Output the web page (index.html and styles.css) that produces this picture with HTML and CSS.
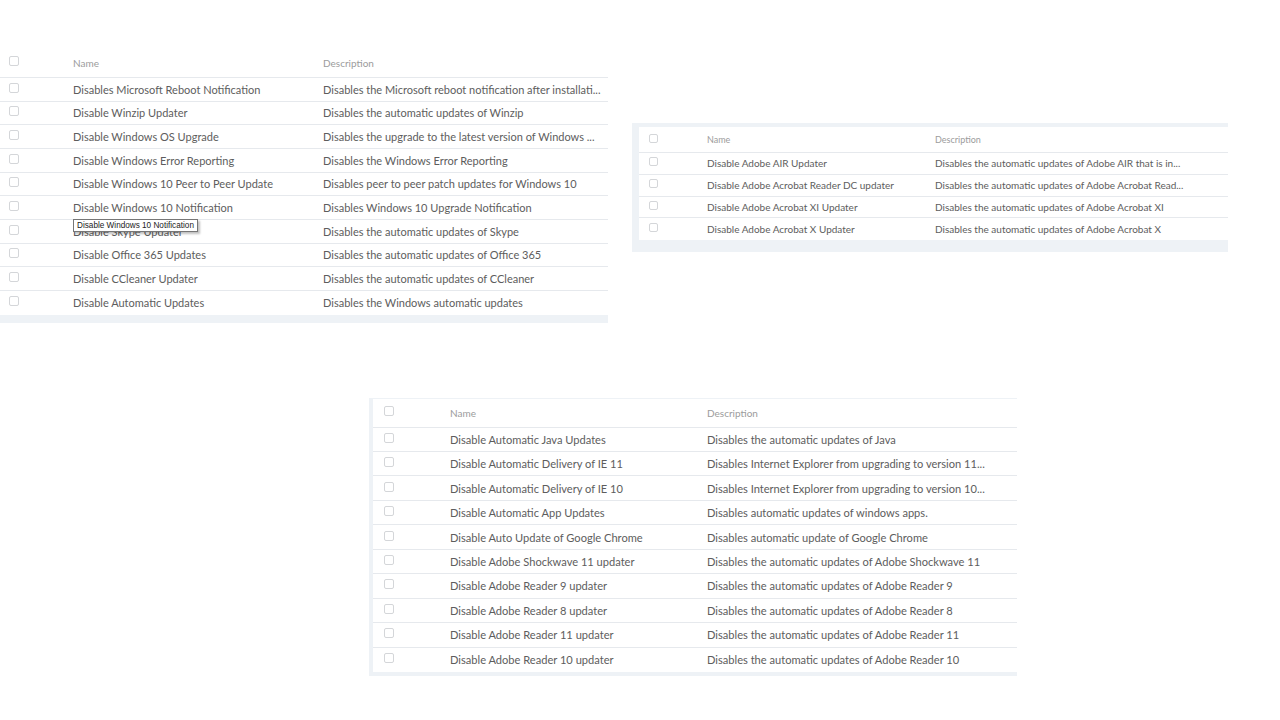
FILE: index.html
```html
<!DOCTYPE html>
<html>
<head>
<meta charset="utf-8">
<link rel="stylesheet" href="styles.css">
</head>
<body>
<div class="page">
  <div class="top-row">
    <div class="card card-one">
      <div class="grid grid-one">
        <div class="row head"><span class="cb"></span><span class="cell">Name</span><span class="cell">Description</span></div>
        <div class="row"><span class="cb"></span><span class="cell">Disables Microsoft Reboot Notification</span><span class="cell">Disables the Microsoft reboot notification after installati...</span></div>
        <div class="row"><span class="cb"></span><span class="cell">Disable Winzip Updater</span><span class="cell">Disables the automatic updates of Winzip</span></div>
        <div class="row"><span class="cb"></span><span class="cell">Disable Windows OS Upgrade</span><span class="cell">Disables the upgrade to the latest version of Windows ...</span></div>
        <div class="row"><span class="cb"></span><span class="cell">Disable Windows Error Reporting</span><span class="cell">Disables the Windows Error Reporting</span></div>
        <div class="row"><span class="cb"></span><span class="cell">Disable Windows 10 Peer to Peer Update</span><span class="cell">Disables peer to peer patch updates for Windows 10</span></div>
        <div class="row"><span class="cb"></span><span class="cell has-tip">Disable Windows 10 Notification<span class="tip">Disable Windows 10 Notification</span></span><span class="cell">Disables Windows 10 Upgrade Notification</span></div>
        <div class="row"><span class="cb"></span><span class="cell">Disable Skype Updater</span><span class="cell">Disables the automatic updates of Skype</span></div>
        <div class="row"><span class="cb"></span><span class="cell">Disable Office 365 Updates</span><span class="cell">Disables the automatic updates of Office 365</span></div>
        <div class="row"><span class="cb"></span><span class="cell">Disable CCleaner Updater</span><span class="cell">Disables the automatic updates of CCleaner</span></div>
        <div class="row"><span class="cb"></span><span class="cell">Disable Automatic Updates</span><span class="cell">Disables the Windows automatic updates</span></div>
      </div>
    </div>
    <div class="card card-two">
      <div class="grid grid-two">
        <div class="row head"><span class="cb"></span><span class="cell">Name</span><span class="cell">Description</span></div>
        <div class="row"><span class="cb"></span><span class="cell">Disable Adobe AIR Updater</span><span class="cell">Disables the automatic updates of Adobe AIR that is in...</span></div>
        <div class="row"><span class="cb"></span><span class="cell">Disable Adobe Acrobat Reader DC updater</span><span class="cell">Disables the automatic updates of Adobe Acrobat Read...</span></div>
        <div class="row"><span class="cb"></span><span class="cell">Disable Adobe Acrobat XI Updater</span><span class="cell">Disables the automatic updates of Adobe Acrobat XI</span></div>
        <div class="row"><span class="cb"></span><span class="cell">Disable Adobe Acrobat X Updater</span><span class="cell">Disables the automatic updates of Adobe Acrobat X</span></div>
      </div>
    </div>
  </div>
  <div class="bottom-row">
    <div class="card card-three">
      <div class="grid grid-three">
        <div class="row head"><span class="cb"></span><span class="cell">Name</span><span class="cell">Description</span></div>
        <div class="row"><span class="cb"></span><span class="cell">Disable Automatic Java Updates</span><span class="cell">Disables the automatic updates of Java</span></div>
        <div class="row"><span class="cb"></span><span class="cell">Disable Automatic Delivery of IE 11</span><span class="cell">Disables Internet Explorer from upgrading to version 11...</span></div>
        <div class="row"><span class="cb"></span><span class="cell">Disable Automatic Delivery of IE 10</span><span class="cell">Disables Internet Explorer from upgrading to version 10...</span></div>
        <div class="row"><span class="cb"></span><span class="cell">Disable Automatic App Updates</span><span class="cell">Disables automatic updates of windows apps.</span></div>
        <div class="row"><span class="cb"></span><span class="cell">Disable Auto Update of Google Chrome</span><span class="cell">Disables automatic update of Google Chrome</span></div>
        <div class="row"><span class="cb"></span><span class="cell">Disable Adobe Shockwave 11 updater</span><span class="cell">Disables the automatic updates of Adobe Shockwave 11</span></div>
        <div class="row"><span class="cb"></span><span class="cell">Disable Adobe Reader 9 updater</span><span class="cell">Disables the automatic updates of Adobe Reader 9</span></div>
        <div class="row"><span class="cb"></span><span class="cell">Disable Adobe Reader 8 updater</span><span class="cell">Disables the automatic updates of Adobe Reader 8</span></div>
        <div class="row"><span class="cb"></span><span class="cell">Disable Adobe Reader 11 updater</span><span class="cell">Disables the automatic updates of Adobe Reader 11</span></div>
        <div class="row"><span class="cb"></span><span class="cell">Disable Adobe Reader 10 updater</span><span class="cell">Disables the automatic updates of Adobe Reader 10</span></div>
      </div>
    </div>
  </div>
</div>
</body>
</html>
```
FILE: styles.css
```css
* { box-sizing: border-box; }
html, body { margin: 0; padding: 0; background: #ffffff; }
body {
  font-family: Lato, "Open Sans", sans-serif;
  color: #5d5d5d;
  width: 1280px;
  height: 720px;
  overflow: hidden;
}
.page { display: flex; flex-direction: column; }
.top-row { display: flex; align-items: flex-start; }
.bottom-row { display: flex; padding-left: 369px; margin-top: 75px; }

.card { background: #eef2f6; }
.card-one { width: 608px; margin-top: 48px; padding-bottom: 8px; }
.card-two { width: 596px; margin-left: 24px; margin-top: 123px; padding: 4px 0 12px 7px; }
.card-three { width: 648px; padding: 1px 0 4px 4px; }

.grid { background: #ffffff; display: flex; flex-direction: column; }
.row {
  display: grid;
  align-items: center;
  border-bottom: 1px solid #e6e9ed;
  white-space: nowrap;
}
.row:last-child { border-bottom: none; }
.cell { overflow: hidden; text-overflow: ellipsis; white-space: nowrap; }
.head .cell { color: #9c9c9c; }

.cb {
  display: block;
  width: 10px;
  height: 10px;
  border: 1px solid #d4d6d9;
  border-radius: 2px;
  background: #fff;
  margin-top: -3px;
}

.grid-one { font-size: 11px; }
.grid-one .row { grid-template-columns: 64px 250px 285px; padding-left: 9px; height: 23.67px; }
.grid-one .head { height: 30px; }
.grid-one .head .cell { font-size: 10px; }

.grid-two { font-size: 10px; }
.grid-two .row { grid-template-columns: 58px 228px 260px; padding-left: 10px; height: 21.75px; }
.grid-two .head { height: 26px; }
.grid-two .head .cell { font-size: 9px; }
.grid-two .cb { width: 9px; height: 9px; }

.grid-three { font-size: 11.1px; }
.grid-three .row { grid-template-columns: 66px 257px 300px; padding-left: 11px; height: 24.44px; }
.grid-three .head { height: 29px; }
.grid-three .head .cell { font-size: 10px; }

.has-tip { position: relative; overflow: visible; }
.tip {
  position: absolute;
  left: 0;
  top: 18px;
  z-index: 2;
  background: #ffffff;
  border: 1px solid #767676;
  box-shadow: 2px 2px 2px rgba(0,0,0,0.25);
  color: #222;
  font-family: "Liberation Sans", sans-serif;
  font-size: 8.2px;
  line-height: 11px;
  padding: 0 3px;
}
```
